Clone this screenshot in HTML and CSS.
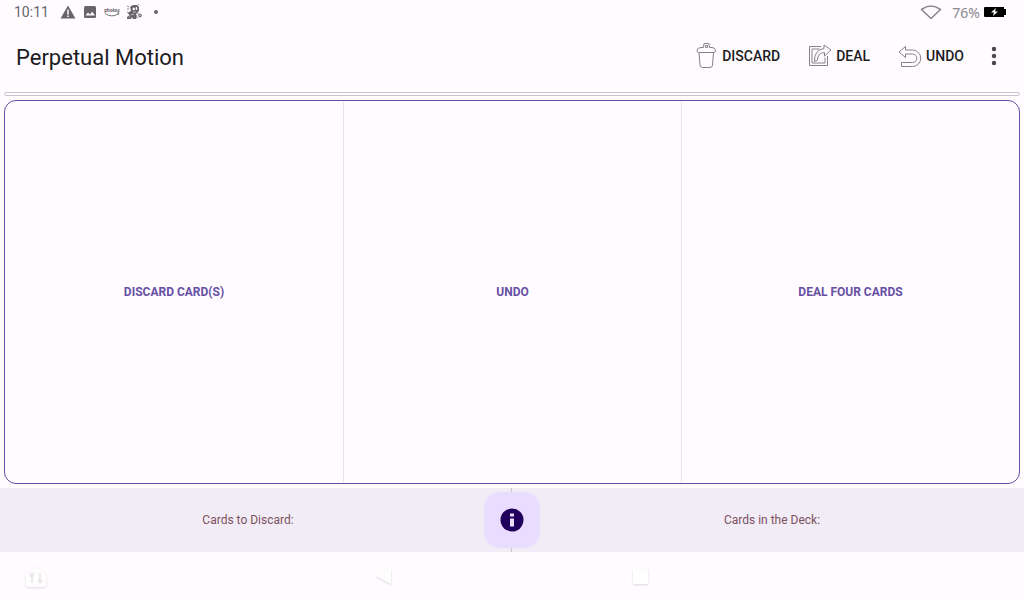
FILE: index.html
```html
<!DOCTYPE html>
<html lang="en">
<head>
<meta charset="utf-8">
<meta name="viewport" content="width=device-width, initial-scale=1">
<title>Perpetual Motion</title>
<link rel="stylesheet" href="styles.css">
</head>
<body>
<div class="status">
  <span class="clock">10:11</span>
  <svg class="s-icon" width="16" height="16" viewBox="0 0 16 16"><path d="M8 1.500L15.500 14.500H.5z" fill="#666469"/><path d="M8 5.500v5M8 11.500v1.500" stroke="#fffbff" stroke-width="1.500"/></svg>
  <svg class="s-icon" width="16" height="16" viewBox="0 0 16 16"><rect x="2" y="2" width="12" height="12" rx="1.500" fill="#666469"/><path d="M3.500 11.500l2.500-3 2 2 2.200-3 2.800 4z" fill="#fffbff"/></svg>
  <svg class="s-icon" width="16" height="16" viewBox="0 0 16 16"><text class="tiny" x="8" y="8" text-anchor="middle">photos</text><path d="M1 9.500q7 4.500 13 .5M13 9l2-.2-.6 2" fill="none" stroke="#777" stroke-width="1"/></svg>
  <svg class="s-icon" width="16" height="16" viewBox="0 0 16 16"><path d="M4 3l3-2 4 0 2 2v4l-2 2-1 1 1 2-1 3H7l-1-2-1 2H1v-2l3-2-2-1 1-2 2-1z" fill="#66646a"/><path d="M7 4h1.500v2H7zM10 3.500h1v2h-1zM7 8h3M5 11l3-1M3 13h1" fill="#fffbff" stroke="#fffbff" stroke-width=".6"/><path d="M1 2l2 1M1 5h2M1 8l2 1M12 1l1-1M11 9l2 1M10 12l2 2" stroke="#8a888c" stroke-width="1"/><circle cx="14" cy="11.500" r="1.400" fill="#bbb" stroke="#66646a" stroke-width="1"/></svg>
  <span class="dot"></span>
  <span class="spacer"></span>
  <svg class="wifi" width="22" height="16" viewBox="0 0 22 16"><path d="M1.500 5.500Q11-1.500 20.500 5.500L11 14.500z" fill="none" stroke="#8a888c" stroke-width="1.600" stroke-linejoin="round"/></svg>
  <span class="percent">76%</span>
  <svg width="22" height="12" viewBox="0 0 22 12"><path d="M1 1h19v2h2v6h-2v2H1q-1 0-1-1V2q0-1 1-1z" fill="#000"/><path d="M12 2L7 6.500h3L9 10l5-4.500h-3z" fill="#fff"/></svg>
</div>
<header class="toolbar">
  <h1 class="title">Perpetual Motion</h1>
  <button class="action"><svg class="icon" width="24" height="28" viewBox="0 0 24 28"><path d="M5 10.500l1 12.500q.2 2.500 2.500 2.500h7.500q2.300 0 2.500-2.500l1-12.500M4.500 10.500Q3 10.500 3 8.500 3.500 5.500 7 5.500h2.500L10 1.500h5l.5 4H18q3 0 3.500 3 0 2-1.500 2zM11.500 5.500h2V3.500h-2z"/></svg>DISCARD</button>
  <button class="action"><svg class="icon" width="24" height="28" viewBox="0 0 24 28"><path d="M13 4.500H1.500v19h18V14M11.500 7H4v14h13v-5.500M6.500 19.500Q6 8 16 6.500V3l7 5-6.500 6v-3.500Q9.500 11 9.500 18z"/></svg>DEAL</button>
  <button class="action"><svg class="icon" width="24" height="28" viewBox="0 0 24 28"><path d="M1 10L7.500 4.500V8h7a8.200 8.200 0 0 1 0 16.500h-11v-4h11a4.200 4.200 0 0 0 0-8.500h-7v3.500z"/></svg>UNDO</button>
  <button class="more" aria-label="More options"><svg width="6" height="20" viewBox="0 0 6 20"><g fill="#49454f"><circle cx="3" cy="3" r="2.200"/><circle cx="3" cy="10" r="2.200"/><circle cx="3" cy="17" r="2.200"/></g></svg></button>
</header>
<div class="track"></div>
<main class="panel">
  <button class="choice">DISCARD CARD(S)</button>
  <button class="choice">UNDO</button>
  <button class="choice">DEAL FOUR CARDS</button>
</main>
<footer class="counts">
  <span class="count">Cards to Discard:</span>
  <div class="middle"><button class="info" aria-label="Information"><svg width="24" height="24" viewBox="0 0 24 24"><circle cx="12" cy="12" r="11.500" fill="#21005d"/><path d="M10 5.500h4v3h-4zM10 10.500h4v8h-4z" fill="#e8ddff"/></svg></button></div>
  <span class="count deck">Cards in the Deck:</span>
</footer>
<nav class="system">
  <button class="key home" aria-label="Home"><svg width="26" height="26" viewBox="0 0 26 26"><path d="M3 11L13 2l10 9v10q0 2-2 2H5q-2 0-2-2z"/><path class="mark" d="M9 19v-7M17 9v6"/><circle class="spot" cx="9" cy="11" r="2.500"/><circle class="spot" cx="17" cy="17" r="2.500"/></svg></button>
  <button class="key" aria-label="Back"><svg width="26" height="26" viewBox="0 0 26 26"><path d="M5 12L20 4v16z"/></svg></button>
  <button class="key" aria-label="Recent apps"><svg width="26" height="26" viewBox="0 0 26 26"><rect x="6" y="5" width="15" height="15"/></svg></button>
</nav>
</body>
</html>
```
FILE: styles.css
```css
* { box-sizing: border-box; }
body {
  margin: 0;
  min-height: 100vh;
  display: flex;
  flex-direction: column;
  background: #fffbff;
  color: #1c1b1e;
  font-family: Roboto, sans-serif;
}
button {
  margin: 0;
  padding: 0;
  border: 0;
  background: none;
  color: inherit;
  font: inherit;
}
svg { display: block; flex: none; }

.status {
  height: 24px;
  display: flex;
  align-items: center;
  padding: 0 18px 0 14px;
  color: #67656a;
  font-size: 14px;
}
.clock { margin-right: 11px; }
.s-icon { margin-right: 6px; }
.tiny { font-size: 5px; font-weight: 700; fill: #666469; }
.dot {
  width: 4px;
  height: 4px;
  margin-left: 6px;
  border-radius: 50%;
  background: #67656a;
}
.spacer { flex: 1; }
.wifi { margin-right: 10px; }
.percent {
  margin-right: 4px;
  color: #8a888c;
  font-family: "Noto Sans", sans-serif;
}

.toolbar {
  height: 64px;
  display: flex;
  align-items: center;
  padding: 0 16px;
}
.title {
  flex: 1;
  margin: 0;
  padding-top: 2px;
  font-size: 22px;
  font-weight: 400;
}
.action {
  display: flex;
  align-items: center;
  gap: 4px;
  margin-right: 28px;
  font-size: 14px;
  font-weight: 500;
}
.icon { fill: none; stroke: #858387; stroke-width: 1; stroke-linejoin: round; }
.more {
  display: grid;
  place-items: center;
  width: 28px;
  height: 40px;
  margin-left: -12px;
}

.track {
  height: 4px;
  margin: 4px 4px;
  border: 1px solid #c9c3d4;
  border-radius: 2px;
}
.panel {
  flex: 1;
  display: grid;
  grid-template-columns: repeat(3, 1fr);
  margin: 0 4px 4px;
  border: 1px solid #6750a4;
  border-radius: 12px;
}
.choice {
  color: #6750a4;
  font-size: 12px;
  font-weight: 700;
}
.choice + .choice { border-left: 1px solid #e9e4ec; }

.counts {
  height: 64px;
  display: grid;
  grid-template-columns: 1fr 56px 1fr;
  align-items: center;
  background: #f2ecf6;
  color: #7d5260;
  font-size: 12px;
  text-align: center;
}
.count { padding-left: 12px; }
.deck { padding: 0 20px 0 0; }
.middle {
  height: 100%;
  display: grid;
  place-items: center;
  background: linear-gradient(#cac4d0, #cac4d0) 27px 0 / 1px 100% no-repeat;
}
.info {
  display: grid;
  place-items: center;
  width: 56px;
  height: 56px;
  border-radius: 16px;
  background: #e8ddff;
}

.system {
  height: 48px;
  display: grid;
  grid-template-columns: repeat(4, 1fr);
  place-items: center;
  padding-top: 2px;
}
.home { justify-self: start; margin-left: 23px; }
.key svg {
  fill: #fffeff;
  filter: drop-shadow(0 1px 1px #ddd8de);
}
.mark { stroke: #ece8ed; stroke-width: 2; }
.spot { fill: #ece8ed; }
```
